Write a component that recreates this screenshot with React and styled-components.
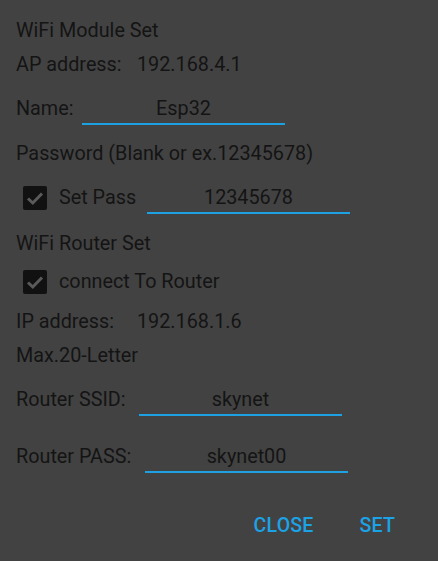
import React from "react";
import styled, { createGlobalStyle } from "styled-components";

const Global = createGlobalStyle`
  html, body { margin: 0; padding: 0; background: #424242; }
  body { font-family: Roboto, "Noto Sans", sans-serif; }
`;

const Dialog = styled.div`
  width: 438px;
  height: 561px;
  box-sizing: border-box;
  background: #424242;
  padding: 20px 0 0 16px;
  display: flex;
  flex-direction: column;
  color: #141414;
  font-size: 19.8px;
  line-height: 21px;
`;

const Row = styled.div`
  display: flex;
  align-items: flex-start;
  white-space: nowrap;
  margin-top: ${(p) => p.$mt || 0}px;
`;

const Label = styled.span`
  display: inline-block;
  width: ${(p) => (p.$w ? `${p.$w}px` : "auto")};
  flex: none;
  white-space: nowrap;
`;

const Field = styled.div`
  width: ${(p) => p.$w || 203}px;
  height: 21px;
  padding-bottom: 4px;
  border-bottom: 2px solid #1da1e2;
  text-align: center;
  flex: none;
`;

const Box = styled.span`
  width: 24px;
  height: 24px;
  margin: -1px 12px -2px 7px;
  border-radius: 2px;
  background: #111111;
  display: inline-flex;
  align-items: center;
  justify-content: center;
  flex: none;
`;

const Actions = styled.div`
  display: flex;
  justify-content: flex-end;
  gap: 46px;
  padding-right: 43px;
  margin-top: 42px;
`;

const Action = styled.span`
  color: #1ba3e6;
  font-weight: 500;
  font-size: 19.5px;
  letter-spacing: 0.2px;
`;

const Check = () => (
  <Box>
    <svg width="24" height="24" viewBox="0 0 24 24">
      <path d="M5 12.5 L9.8 17 L19 7.5" fill="none" stroke="#5a5a5a" strokeWidth="3" />
    </svg>
  </Box>
);

export default function App() {
  return (
    <>
      <Global />
      <Dialog>
        <Row>WiFi Module Set</Row>
        <Row $mt={13}>
          <Label $w={121}>AP address:</Label>
          <span>192.168.4.1</span>
        </Row>
        <Row $mt={23}>
          <Label $w={66}>Name:</Label>
          <Field>Esp32</Field>
        </Row>
        <Row $mt={18}>Password (Blank or ex.12345678)</Row>
        <Row $mt={23}>
          <Check />
          <Label $w={88}>Set Pass</Label>
          <Field>12345678</Field>
        </Row>
        <Row $mt={19}>WiFi Router Set</Row>
        <Row $mt={17}>
          <Check />
          <Label>connect To Router</Label>
        </Row>
        <Row $mt={19}>
          <Label $w={121}>IP address:</Label>
          <span>192.168.1.6</span>
        </Row>
        <Row $mt={13}>Max.20-Letter</Row>
        <Row $mt={23}>
          <Label $w={123}>Router SSID:</Label>
          <Field>skynet</Field>
        </Row>
        <Row $mt={30}>
          <Label $w={129}>Router PASS:</Label>
          <Field>skynet00</Field>
        </Row>
        <Actions>
          <Action>CLOSE</Action>
          <Action>SET</Action>
        </Actions>
      </Dialog>
    </>
  );
}
